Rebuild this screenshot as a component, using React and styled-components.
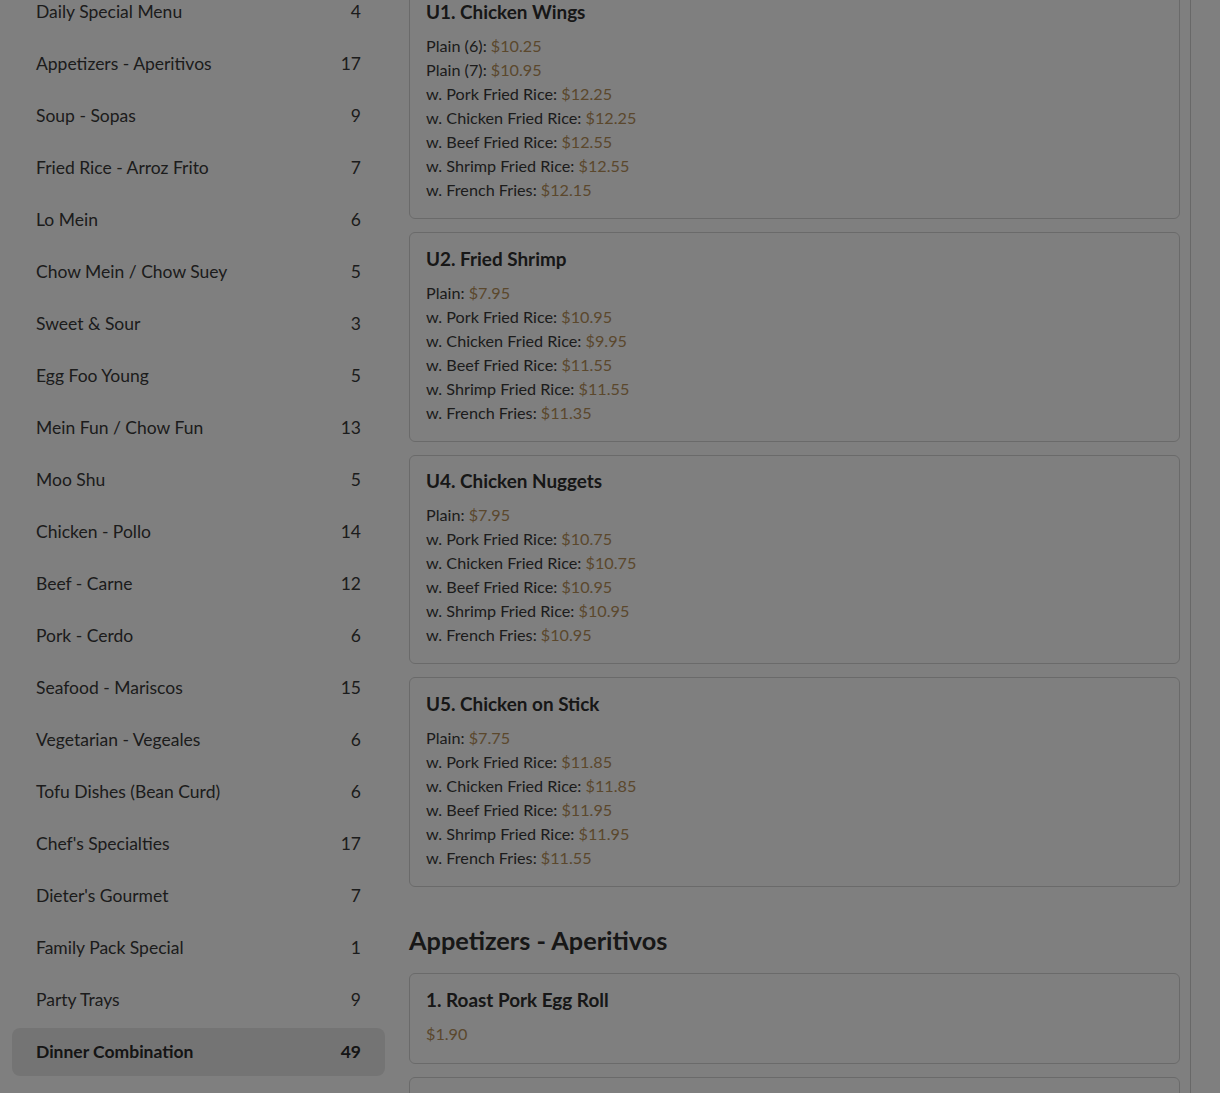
import React from "react";
import styled, { createGlobalStyle } from "styled-components";

const GlobalStyle = createGlobalStyle`
  html, body {
    margin: 0;
    padding: 0;
    background: #ffffff;
    font-family: "Lato", "Noto Sans", sans-serif;
    color: #383838;
    overflow: hidden;
  }
  * { box-sizing: border-box; }
`;

const Page = styled.div`
  display: flex;
  align-items: flex-start;
  gap: 24px;
  padding: 0 0 0 12px;
  margin-top: -16px;
  height: 1200px;
`;

const Sidebar = styled.nav`
  display: flex;
  flex-direction: column;
  gap: 4px;
  width: 373px;
  flex-shrink: 0;
  padding-top: 4px;
`;

const NavItem = styled.div`
  display: flex;
  align-items: center;
  justify-content: space-between;
  height: 48px;
  padding: 0 24px 1px;
  border-radius: 8px;
  font-size: 17.5px;
  font-weight: ${(p) => (p.$active ? 700 : 400)};
  background: ${(p) => (p.$active ? "#e9e9e9" : "transparent")};
  color: ${(p) => (p.$active ? "#2a2a2a" : "#383838")};
`;

const Main = styled.main`
  width: 782px;
  margin-top: 1.5px;
  padding-right: 10px;
  border-right: 1px solid #d0d0d0;
  min-height: 1300px;
  display: flex;
  flex-direction: column;
  gap: 13px;
`;

const Card = styled.div`
  border: 1px solid #d4d4d4;
  border-radius: 6px;
  padding: ${(p) => (p.$single ? "16.5px 16px 17px" : "15.5px 16px 16px")};
  background: #fff;
`;

const Title = styled.div`
  font-size: 18.9px;
  font-weight: 700;
  line-height: 20px;
  color: #2e2e2e;
  margin-bottom: 12px;
`;

const Line = styled.div`
  font-size: 16.2px;
  line-height: 24px;
  color: #383838;
`;

const Price = styled.span`
  color: #b6905a;
`;

const SectionHeading = styled.h2`
  margin: 0;
  padding: 24px 0 4px;
  font-size: 25.3px;
  line-height: 32px;
  font-weight: 700;
  color: #2e2e2e;
`;

const Overlay = styled.div`
  position: fixed;
  inset: 0;
  background: rgba(0, 0, 0, 0.5);
`;

const categories = [
  ["Daily Special Menu", 4],
  ["Appetizers - Aperitivos", 17],
  ["Soup - Sopas", 9],
  ["Fried Rice - Arroz Frito", 7],
  ["Lo Mein", 6],
  ["Chow Mein / Chow Suey", 5],
  ["Sweet & Sour", 3],
  ["Egg Foo Young", 5],
  ["Mein Fun / Chow Fun", 13],
  ["Moo Shu", 5],
  ["Chicken - Pollo", 14],
  ["Beef - Carne", 12],
  ["Pork - Cerdo", 6],
  ["Seafood - Mariscos", 15],
  ["Vegetarian - Vegeales", 6],
  ["Tofu Dishes (Bean Curd)", 6],
  ["Chef's Specialties", 17],
  ["Dieter's Gourmet", 7],
  ["Family Pack Special", 1],
  ["Party Trays", 9],
  ["Dinner Combination", 49],
];

const specials = [
  {
    name: "U1. Chicken Wings",
    prices: [
      ["Plain (6)", "$10.25"],
      ["Plain (7)", "$10.95"],
      ["w. Pork Fried Rice", "$12.25"],
      ["w. Chicken Fried Rice", "$12.25"],
      ["w. Beef Fried Rice", "$12.55"],
      ["w. Shrimp Fried Rice", "$12.55"],
      ["w. French Fries", "$12.15"],
    ],
  },
  {
    name: "U2. Fried Shrimp",
    prices: [
      ["Plain", "$7.95"],
      ["w. Pork Fried Rice", "$10.95"],
      ["w. Chicken Fried Rice", "$9.95"],
      ["w. Beef Fried Rice", "$11.55"],
      ["w. Shrimp Fried Rice", "$11.55"],
      ["w. French Fries", "$11.35"],
    ],
  },
  {
    name: "U4. Chicken Nuggets",
    prices: [
      ["Plain", "$7.95"],
      ["w. Pork Fried Rice", "$10.75"],
      ["w. Chicken Fried Rice", "$10.75"],
      ["w. Beef Fried Rice", "$10.95"],
      ["w. Shrimp Fried Rice", "$10.95"],
      ["w. French Fries", "$10.95"],
    ],
  },
  {
    name: "U5. Chicken on Stick",
    prices: [
      ["Plain", "$7.75"],
      ["w. Pork Fried Rice", "$11.85"],
      ["w. Chicken Fried Rice", "$11.85"],
      ["w. Beef Fried Rice", "$11.95"],
      ["w. Shrimp Fried Rice", "$11.95"],
      ["w. French Fries", "$11.55"],
    ],
  },
];

const appetizers = [
  ["1. Roast Pork Egg Roll", "$1.90"],
  ["2. Shrimp Egg Roll", "$1.90"],
];

export default function App() {
  return (
    <>
      <GlobalStyle />
      <Page>
        <Sidebar>
          {categories.map(([name, count]) => (
            <NavItem key={name} $active={name === "Dinner Combination"}>
              <span>{name}</span>
              <span>{count}</span>
            </NavItem>
          ))}
        </Sidebar>
        <Main>
          {specials.map((item) => (
            <Card key={item.name}>
              <Title>{item.name}</Title>
              {item.prices.map(([label, price]) => (
                <Line key={label}>
                  {label}: <Price>{price}</Price>
                </Line>
              ))}
            </Card>
          ))}
          <SectionHeading>Appetizers - Aperitivos</SectionHeading>
          {appetizers.map(([name, price]) => (
            <Card key={name} $single>
              <Title>{name}</Title>
              <Line>
                <Price>{price}</Price>
              </Line>
            </Card>
          ))}
        </Main>
      </Page>
      <Overlay />
    </>
  );
}
